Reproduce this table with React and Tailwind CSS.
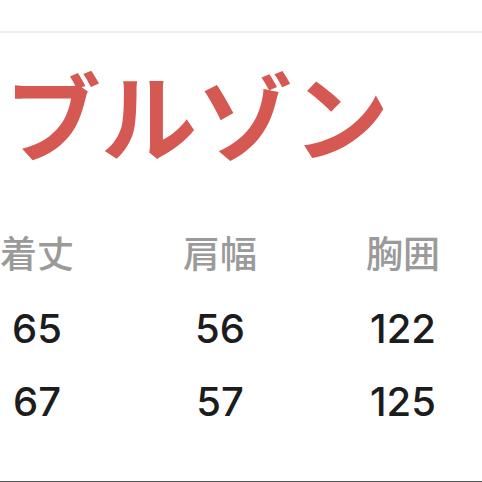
export default function App() {
  const cjk = { fontFamily: '"Noto Sans CJK JP", "Noto Sans", sans-serif' };
  const num = { fontFamily: 'Inter, "Liberation Sans", sans-serif' };
  const rows = [
    ["65", "56", "122"],
    ["67", "57", "125"],
  ];
  return (
    <div className="w-[482px] h-[482px] bg-white flex flex-col overflow-hidden border-b border-[#555555]">
      <div className="h-[31px] shrink-0" />
      <div className="h-[2px] shrink-0 bg-[#eeeeee]" />
      <div
        className="mt-[32px] pl-[5px] text-[96px] leading-[96px] font-bold text-[#d65853]"
        style={cjk}
      >
        ブルゾン
      </div>
      <div className="mt-[71px] grid grid-cols-[74px_74px_74px] gap-x-[109px]">
        {["着丈", "肩幅", "胸囲"].map((h) => (
          <div
            key={h}
            className="text-center text-[37px] leading-[40px] text-[#9a9a9a] font-medium"
            style={cjk}
          >
            {h}
          </div>
        ))}
      </div>
      <div className="mt-[37px] flex flex-col gap-y-[33px]">
        {rows.map((r, i) => (
          <div key={i} className="grid grid-cols-[74px_74px_74px] gap-x-[109px]">
            {r.map((v, j) => (
              <div
                key={j}
                className="text-center text-[40px] leading-[40px] font-medium text-[#1c1c1c]"
                style={num}
              >
                {v}
              </div>
            ))}
          </div>
        ))}
      </div>
    </div>
  );
}
